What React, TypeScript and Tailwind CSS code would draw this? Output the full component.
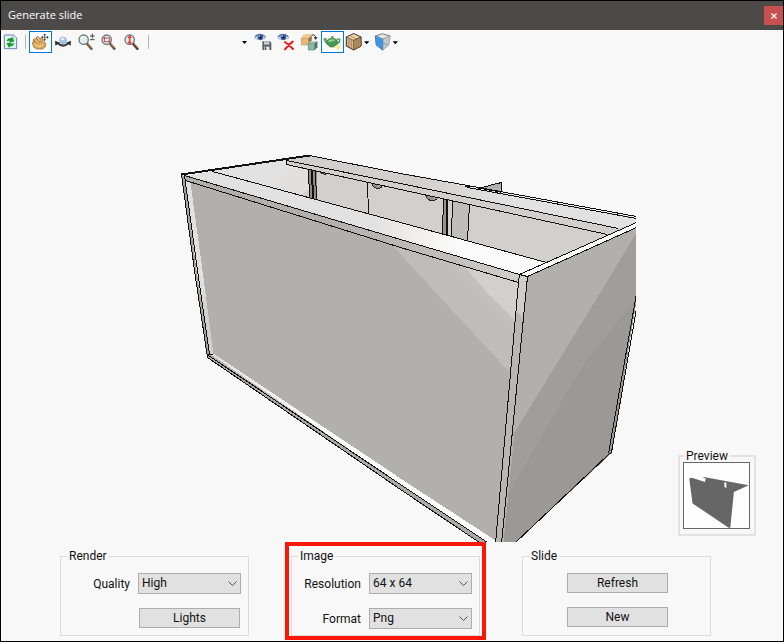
import { useState } from "react";
import type { ReactNode } from "react";

type ToolProps = {
  label: string;
  active?: boolean;
  wide?: boolean;
  onClick?: () => void;
  children: ReactNode;
};

// The toolbar glyphs are drawn on a grid of 3 units per pixel
function Tool({ label, active, wide, onClick, children }: ToolProps) {
  return (
    <button
      type="button"
      aria-label={label}
      onClick={onClick}
      className={`h-[22px] shrink-0 border ${wide ? "w-[29px]" : "w-[23px]"} ${active ? "border-[#0078d7] bg-[#fdfdfd]" : "border-transparent"}`}
    >
      <svg viewBox={wide ? "0 0 81 60" : "0 0 63 60"} className="block h-full w-full">
        {children}
      </svg>
    </button>
  );
}

function Separator() {
  return (
    <div className="flex w-2 shrink-0 justify-center">
      <div className="h-[14px] w-px bg-[#b4b4b4]" />
    </div>
  );
}

function Lens({ handle }: { handle: string }) {
  return (
    <>
      <path d="M34 36 L46 50" stroke={handle} strokeWidth="8" strokeLinecap="round" />
      <path d="M36 36 L47 48" stroke="#c89a6c" strokeWidth="2" />
      <circle cx="23" cy="23" r="14" fill="#e2eeee" stroke="#6f7676" strokeWidth="4" />
    </>
  );
}

function Eye() {
  return (
    <>
      <path d="M5 18 Q20 -1 39 17 Q22 29 5 18Z" fill="#d9e3f2" stroke="#8b99b4" strokeWidth="2" />
      <path d="M6 14 Q20 1 37 14" fill="none" stroke="#54709c" strokeWidth="4" />
      <circle cx="22" cy="16" r="8" fill="#2554a0" />
      <circle cx="22" cy="16" r="4" fill="#102447" />
      <circle cx="19" cy="12" r="2" fill="#fff" />
    </>
  );
}

function Toolbar() {
  const [tool, setTool] = useState("pan");
  const [shaded, setShaded] = useState(true);

  return (
    <div className="flex h-[25px] items-start overflow-hidden pt-px">
      <button type="button" aria-label="Reload view" className="h-[22px] w-5 shrink-0 border border-transparent">
        <svg viewBox="0 0 54 60" className="block h-full w-full">
          <path d="M7 9 H36 L44 17 V50 H7Z" fill="#e4f0fc" stroke="#6688ad" strokeWidth="3" />
          <path d="M35 9 V18 H44" fill="#fff" stroke="#8aa8cc" strokeWidth="2" />
          <path d="M15 27 Q17 18 27 20 L30 16 L36 28 L22 30 L25 25 Q20 24 15 27Z" fill="#0b9a18" stroke="#0b9a18" strokeWidth="2" />
          <path d="M36 34 Q34 44 24 42 L21 46 L15 34 L29 33 L26 37 Q31 38 36 34Z" fill="#0b9a18" stroke="#0b9a18" strokeWidth="2" />
        </svg>
      </button>
      <div className="flex h-[22px] items-center">
        <Separator />
      </div>

      <Tool label="Pan" active={tool === "pan"} onClick={() => setTool("pan")}>
        <path d="M6 32 L12 31 L9 24 L13 20 L18 22 L19 15 L25 14 L29 20 L34 18 L40 27 L48 35 L46 44 L38 51 H20 L12 46Z" fill="#dda961" stroke="#8d5d26" strokeWidth="2" />
        <path d="M12 24 L22 35 M20 20 L29 32 M28 20 L35 31" stroke="#895e2b" strokeWidth="2" />
        <path d="M15 22 L25 32 M23 17 L32 28 M13 37 L27 44 L40 38" fill="none" stroke="#f6d89e" strokeWidth="3" />
        <path d="M33 16 H56 M44 5 V27" stroke="#fdfdfd" strokeWidth="6" />
        <path d="M36 16 H53 M44 8 V24" stroke="#333" strokeWidth="2" />
        <path d="M33 16 L38 11 V21Z M56 16 L51 11 V21Z M44 5 L39 10 H49Z M44 27 L39 22 H49Z" fill="#333" />
      </Tool>
      <Tool label="Orbit" active={tool === "orbit"} onClick={() => setTool("orbit")}>
        <path d="M14 33 Q30 49 47 33" fill="none" stroke="#3c3c3c" strokeWidth="6" />
        <path d="M6 26 L7 41 L21 32Z M54 26 L53 41 L39 32Z" fill="#333" />
        <circle cx="30" cy="25" r="10" fill="#9fc4e8" stroke="#8caac8" strokeWidth="2" />
        <ellipse cx="29" cy="21" rx="6" ry="4" fill="#e6f5ff" />
      </Tool>
      <Tool label="Zoom in and out" active={tool === "zoom"} onClick={() => setTool("zoom")}>
        <Lens handle="#79553d" />
        <path d="M15 19 Q18 13 25 14" fill="none" stroke="#fff" strokeWidth="4" />
        <path d="M49 5 V19 M42 12 H56 M42 23 H56" stroke="#444" strokeWidth="3" />
      </Tool>
      <Tool label="Zoom window" active={tool === "window"} onClick={() => setTool("window")}>
        <Lens handle="#79553d" />
        <rect x="16" y="18" width="15" height="11" fill="none" stroke="#d04b52" strokeWidth="3" />
        <path d="M12 18 H19 M16 14 V21 M28 29 H35 M31 26 V33" stroke="#b13e48" strokeWidth="2" />
      </Tool>
      <Tool label="Zoom extents" active={tool === "extents"} onClick={() => setTool("extents")}>
        <Lens handle="#4d3932" />
        <path d="M23 15 V32" stroke="#f03b37" strokeWidth="5" />
        <path d="M23 9 L30 18 H16Z M23 38 L30 29 H16Z" fill="#f03b37" />
      </Tool>
      <div className="flex h-[22px] items-center">
        <Separator />
      </div>

      <button type="button" aria-label="Saved views" className="flex h-[22px] w-[100px] shrink-0 items-center justify-end pr-[5px]">
        <svg viewBox="0 0 5 3" className="h-[3px] w-[5px]">
          <path d="M0 0 H5 L2.5 3Z" fill="#000" />
        </svg>
      </button>
      <Tool label="Save view">
        <Eye />
        <path d="M28 28 H51 L55 32 V54 H28Z" fill="#5c6168" />
        <path d="M33 28 H49 V38 H33Z" fill="#c6cbd1" />
        <path d="M34 44 H49 V54 H34Z" fill="#eceef0" />
        <path d="M38 46 V54" stroke="#4c5057" strokeWidth="4" />
      </Tool>
      <Tool label="Delete view">
        <Eye />
        <path d="M27 30 Q39 38 51 51 M50 29 Q38 38 27 52" fill="none" stroke="#ef161a" strokeWidth="6" strokeLinecap="round" />
      </Tool>
      <Tool label="Replace materials">
        <path d="M7 20 L12 8 L22 6 H38 V27 L29 39 H7Z" fill="#efcb96" />
        <path d="M7 19 H29 V39 H7Z" fill="#e5b779" stroke="#c09a68" strokeWidth="2" />
        <path d="M29 19 L38 9 V29 L29 39Z" fill="#98724d" />
        <path d="M28 34 L36 27 H55 V46 L47 54 H28Z" fill="#b5d3c3" />
        <path d="M28 34 H47 V54 H28Z" fill="#8bb7a3" stroke="#60887a" strokeWidth="2" />
        <path d="M47 34 L55 27 V46 L47 54Z" fill="#54756a" />
        <path d="M39 9 Q49 7 50 17" fill="none" stroke="#222" strokeWidth="3" />
        <path d="M44 16 H56 L50 23Z" fill="#222" />
      </Tool>
      <Tool label="Shaded" active={shaded} onClick={() => setShaded(!shaded)}>
        <path d="M18 39 Q9 34 5 20 L12 19 Q14 27 20 29" fill="#6dac6f" stroke="#4b8c58" strokeWidth="2" />
        <path d="M44 22 Q56 18 53 27 Q51 34 41 36" fill="none" stroke="#458b54" strokeWidth="4" />
        <path d="M14 29 Q17 20 30 18 Q43 19 47 28 Q45 40 34 45 H24 Q15 40 14 29Z" fill="#4a9858" stroke="#397d4c" strokeWidth="2" />
        <path d="M18 27 Q27 19 40 24 Q33 30 20 29Z" fill="#a5d3a0" />
        <ellipse cx="31" cy="15" rx="5" ry="3" fill="#63a569" />
        <path d="M47 37 V53 M39 45 H55 M42 40 L52 50 M52 40 L42 50" stroke="#dac91f" strokeWidth="2" />
        <circle cx="47" cy="45" r="4" fill="#fff36b" />
      </Tool>
      <Tool label="Visual style" wide>
        <path d="M4 15 L26 5 L48 15 V42 L26 54 L4 42Z" fill="#d8b98c" stroke="#36291d" strokeWidth="3" />
        <path d="M4 15 L26 5 L48 15 L26 25Z" fill="#efd6a9" stroke="#45372a" strokeWidth="2" />
        <path d="M26 25 L48 15 V42 L26 54Z" fill="#b89366" stroke="#45372a" strokeWidth="2" />
        <path d="M12 20 V45 M19 23 V49 M34 23 V49 M41 20 V45 M15 12 L35 20" stroke="#8b6b45" strokeWidth="2" />
        <path d="M57 28 H73 L65 37Z" fill="#000" />
      </Tool>
      <Tool label="Projection" wide>
        <path d="M4 12 L25 5 L48 12 L44 39 L26 54 L7 39Z" fill="#e0e3e5" stroke="#777e84" strokeWidth="3" />
        <path d="M26 21 L48 12 L44 39 L26 54Z" fill="#c3c8cb" />
        <path d="M4 12 L26 21 V54 L7 39Z" fill="#4a9ce9" stroke="#3274b6" strokeWidth="2" />
        <path d="M4 12 L26 21 L48 12 M26 21 V54 M26 33 L44 39" fill="none" stroke="#7f868b" strokeWidth="2" />
        <path d="M8 17 L24 23 V49 L10 38Z" fill="#3897ed" />
        <path d="M56 28 H72 L64 37Z" fill="#000" />
      </Tool>
    </div>
  );
}

function Cabinet() {
  return (
    <svg
      viewBox="0.5 54.5 635 487"
      preserveAspectRatio="xMaxYMax meet"
      shapeRendering="crispEdges"
      className="block h-auto w-full"
      role="img"
      aria-label="Cabinet model"
    >
      <defs>
        <linearGradient id="topRail" gradientUnits="userSpaceOnUse" x1="200" y1="0" x2="540" y2="0">
          <stop offset="0.5" stopColor="#e1e1e1" />
          <stop offset="0.62" stopColor="#efedeb" />
          <stop offset="0.75" stopColor="#fafafa" />
        </linearGradient>
        <linearGradient id="backRail" gradientUnits="userSpaceOnUse" x1="300" y1="0" x2="636" y2="0">
          <stop offset="0.35" stopColor="#d1d0ce" />
          <stop offset="0.6" stopColor="#e1e1e1" />
        </linearGradient>
        <linearGradient id="frontEdge" gradientUnits="userSpaceOnUse" x1="184" y1="0" x2="519" y2="0">
          <stop offset="0.4" stopColor="#b1b0ae" />
          <stop offset="0.8" stopColor="#c1c0be" />
          <stop offset="1" stopColor="#d1d0ce" />
        </linearGradient>
        <linearGradient id="leftStile" gradientUnits="userSpaceOnUse" x1="0" y1="180" x2="0" y2="355">
          <stop offset="0.6" stopColor="#e2e1e1" />
          <stop offset="0.75" stopColor="#d1d0ce" />
        </linearGradient>
        <linearGradient id="bottomRail" gradientUnits="userSpaceOnUse" x1="212" y1="0" x2="330" y2="0">
          <stop offset="0" stopColor="#e1e1e1" />
          <stop offset="1" stopColor="#fdfdfd" />
        </linearGradient>
      </defs>

      {/* inside of the box */}
      <path d="M181 174 L309 155 L636 219 L636 223 L546 262 L212 171Z" fill="#d1d0ce" />
      <path d="M181 174 L286 159 V164 L308 169 V197 L212 171Z" fill="#e2e1e2" />
      <path d="M296 167 L308 169 V190 L300 195 L274 187Z" fill="#e2dedb" />
      <path d="M308 189 V198 L299 195Z" fill="#d1d0ce" />
      <path d="M453 201 L469 204 L467 240 L451 236Z" fill="#bfbebc" />
      <path d="M307 169 L316 171 V200 L309 198Z" fill="#8c8b8a" />
      <path d="M443 198 L448 199 L447 235 L442 233Z" fill="#959492" />
      <g stroke="#111" fill="none">
        <path d="M308 169 L309 198 M312 170 L313 199 M315 170 L316 200" />
        <path d="M311 170 L312 199" />
        <path d="M367 181 L368 214 M443 198 L442 233 M452 201 L451 236 M469 204 L467 240" />
        <path d="M447 199 L446 235" strokeWidth="2" />
      </g>
      <path d="M371 183 Q375 191 382 186 M425 195 Q430 204 437 198 M319 171 Q322 175 327 173" fill="#969594" stroke="#222" />

      {/* back rail */}
      <path d="M478 188 L500 182 V192Z" fill="#b1b0ae" stroke="#111" />
      <path d="M497 182 L501 182 V191 L497 190Z" fill="#b1b0ae" />
      <path d="M497 183 L501 182 V191" fill="none" stroke="#111" />
      <path d="M309 155 L400 173 L467 186 L636 217 V223 L618 228 L400 183 L286 160Z" fill="url(#backRail)" />
      <path d="M286 160 L400 183 L618 228 L607 234 L400 189 L286 164Z" fill="#d1d0ce" />
      <g stroke="#111" fill="none">
        <path d="M309 155 L400 173 L467 185 L636 216 M464 186 H470" />
        <path d="M467 187 L636 218" />
        <path d="M286 160 L400 183 L618 228 M607 234 L400 189 L286 164 V160" />
      </g>

      {/* front rail and right side */}
      <path d="M184 175 L212 171 L400 222 L546 262 L519 274 L400 239Z" fill="url(#topRail)" />
      <path d="M184 175 L400 239 L519 274 L518 282 L400 247 L185 180Z" fill="url(#frontEdge)" />
      <path d="M519 274 L636 222 V227 L527 276Z" fill="#fcfcfc" />
      <path d="M185 180 L400 247 L518 282 L495 542 L487 542 L208 355Z" fill="#b1b0ae" />
      <path d="M392 245 L518 282 L510 373 L438 295Z" fill="#bebdbb" />
      <path d="M440 259 L518 282 L514 333 L460 280Z" fill="#c1c0be" />
      <path d="M464 266 L518 282 L515 321 L489 295Z" fill="#d1d0ce" />
      <path d="M185 180 L190 182 L202 270 L213 354 L208 355 L196 270Z" fill="url(#leftStile)" />
      <path d="M209 353 L213 353 L400 478 L495 540 V542 H487 L400 484Z" fill="url(#bottomRail)" />
      <path d="M208 355 L400 484 L487 542 H479 L400 489 L207 357Z" fill="#aaa9a7" />
      <path d="M181 174 L184 176 L196 270 L209 355 L207 357Z" fill="#a4a3a2" />
      <path d="M519 274 L527 276 L501 543 H495Z" fill="#b8b7b5" />
      <path d="M519 274 L527 276 L523 317 L516 311Z" fill="#cfcecd" />
      <path d="M527 276 L636 227 V300 L611 453 L514 543 H501Z" fill="#b1b0ae" />
      <path d="M636 232 L598 295 L514 432 L503 543 H514 L611 453 L636 300Z" fill="#9f9e9c" />
      <path d="M636 297 L581 367 L508 493 L503 543 H514 L611 453 L636 300Z" fill="#9a9997" />

      <g stroke="#111" fill="none">
        <path d="M181 174 L309 155" strokeWidth="2" />
        <path d="M212 171 L400 222 L546 262" />
        <path d="M184 175 L400 239 L519 274 M185 180 L400 247 L518 282" />
        <path d="M636 222 L519 274 L518 282 L495 543 M636 227 L527 276 L501 543 M519 274 L527 276" />
        <path d="M181 174 L194 270 L207 357" />
        <path d="M184 175 L197 270 L209 354" />
        <path d="M208 355 L400 484 L487 542 M207 357 L400 489 L479 542" />
        <path d="M207 354 H212" />
        <path d="M636 293 L608 453 M636 308 L611 452 L608 454 L514 543" />
      </g>
    </svg>
  );
}

function Group({ title, children }: { title: string; children: ReactNode }) {
  return (
    <fieldset className="h-[88px] w-[189px] shrink-0 border border-[#dcdcdc] px-[7px] pt-[9px]">
      <legend className="-ml-px h-4 px-[2px] leading-4">{title}</legend>
      <div className="flex flex-col gap-[14px]">{children}</div>
    </fieldset>
  );
}

function SelectRow({ id, label, options }: { id: string; label: string; options: string[] }) {
  return (
    <div className="flex items-center justify-end gap-2">
      <label htmlFor={id}>{label}</label>
      <div className="relative w-[103px]">
        <select id={id} className="block h-[21px] w-full appearance-none border border-[#adadad] bg-[#e1e1e1] pr-5 pl-[3px] leading-[19px]">
          {options.map((o) => (
            <option key={o}>{o}</option>
          ))}
        </select>
        <svg viewBox="0 0 9 6" className="pointer-events-none absolute top-2 right-1 h-[6px] w-[9px]">
          <path d="M0.5 0.5 L4.5 4.5 L8.5 0.5" fill="none" stroke="#505050" />
        </svg>
      </div>
    </div>
  );
}

function PushButton({ children }: { children: ReactNode }) {
  return (
    <button type="button" className="h-[20px] w-[101px] border border-[#adadad] bg-[#e1e1e1] leading-[18px]">
      {children}
    </button>
  );
}

export default function App() {
  return (
    <div className="flex min-h-screen flex-col border border-black bg-[#f8f8f8] font-['Roboto',sans-serif] text-[12px] text-[#111]">
      <header className="flex h-[29px] items-center justify-between bg-[#4c4a48] pl-[7px]">
        <h1 className="font-['Open_Sans',sans-serif] text-[11px] text-white">Generate slide</h1>
        <button type="button" aria-label="Close" className="flex h-[19px] w-[19px] items-center justify-center bg-[#c75050]">
          <svg viewBox="0 0 6 6" className="h-[6px] w-[6px]">
            <path d="M0.5 0.5 L5.5 5.5 M5.5 0.5 L0.5 5.5" stroke="#fff" strokeWidth="1.4" />
          </svg>
        </button>
      </header>
      <Toolbar />

      <main className="flex flex-1">
        <div className="flex min-w-0 flex-1 items-end">
          <Cabinet />
        </div>
        <aside className="flex w-[147px] shrink-0 items-end pb-1.5 pl-[42px]">
          <fieldset className="w-[78px] border-2 border-[#e2e2e2] px-[3px] pb-[5px]">
            <legend className="ml-px h-3 px-[2px] leading-3">Preview</legend>
            <svg viewBox="0 0 198 198" className="block h-[67px] w-[67px] border border-[#666] bg-[#fdfdfd]" role="img" aria-label="Slide preview">
              <path d="M16 47 L24 45 L64 58 L66 48 L56 42 L197 68 L152 88 L141 197 L136 197 L26 123Z" fill="#666" />
              <path d="M123 59 L129 60 V77 L123 72Z" fill="#fff" />
            </svg>
          </fieldset>
        </aside>
      </main>

      <footer className="flex items-start gap-9 pb-px pl-[59px]">
        <div className="pt-1.5">
          <Group title="Render">
            <SelectRow id="quality" label="Quality" options={["High", "Medium", "Low"]} />
            <div className="flex justify-end pr-px">
              <PushButton>Lights</PushButton>
            </div>
          </Group>
        </div>
        <div className="border-4 border-[#fb160a] px-[2px] pt-[2px]">
          <Group title="Image">
            <SelectRow id="resolution" label="Resolution" options={["64 x 64", "128 x 128", "256 x 256"]} />
            <SelectRow id="format" label="Format" options={["Png", "Jpg", "Bmp"]} />
          </Group>
        </div>
        <div className="pt-1.5">
          <Group title="Slide">
            <div className="flex flex-col items-center gap-[14px] pl-[2px]">
              <PushButton>Refresh</PushButton>
              <PushButton>New</PushButton>
            </div>
          </Group>
        </div>
      </footer>
    </div>
  );
}
